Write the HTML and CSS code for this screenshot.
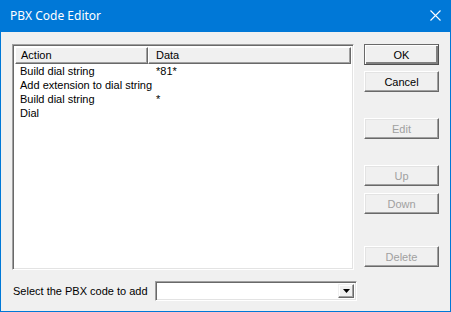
FILE: index.html
```html
<!DOCTYPE html>
<html>
<head>
    <title>PBX Code Editor</title>
    <link rel="stylesheet" href="styles.css">
</head>
<body>
    <div class="window">
        <div class="titlebar">
            <span class="title">PBX Code Editor</span>
            <svg class="close" width="11" height="11" viewBox="0 0 11 11">
                <path d="M0.5 0.5 L10.5 10.5 M10.5 0.5 L0.5 10.5" stroke="#fff" stroke-width="1.1" fill="none"/>
            </svg>
        </div>

        <div class="client">
            <div class="main">
                <div class="listview">
                    <div class="header">
                        <div class="col col-action">Action</div>
                        <div class="col col-data">Data</div>
                    </div>
                    <div class="rows">
                        <div class="row"><span class="cell-action">Build dial string</span><span class="cell-data">*81*</span></div>
                        <div class="row"><span class="cell-action">Add extension to dial string</span><span class="cell-data"></span></div>
                        <div class="row"><span class="cell-action">Build dial string</span><span class="cell-data">*</span></div>
                        <div class="row"><span class="cell-action">Dial</span><span class="cell-data"></span></div>
                    </div>
                </div>

                <div class="buttons">
                    <button class="btn default">OK</button>
                    <button class="btn btn-cancel">Cancel</button>
                    <button class="btn btn-edit" disabled>Edit</button>
                    <button class="btn btn-up" disabled>Up</button>
                    <button class="btn btn-down" disabled>Down</button>
                    <button class="btn btn-delete" disabled>Delete</button>
                </div>
            </div>

            <div class="add-row">
                <label>Select the PBX code to add</label>
                <div class="combo">
                    <div class="combo-field"></div>
                    <div class="combo-btn">
                        <svg width="7" height="4" viewBox="0 0 7 4"><path d="M0 0 H7 L3.5 4 Z" fill="#000"/></svg>
                    </div>
                </div>
            </div>
        </div>
    </div>
</body>
</html>
```

FILE: styles.css
```css
body { margin: 0; background: #f0f0f0; font-family: "Liberation Sans", Arial, sans-serif; font-size: 11px; color: #000; }
.window { width: 451px; height: 312px; box-sizing: border-box; border: 1px solid #0078d7; border-top: none; background: #f0f0f0; display: flex; flex-direction: column; }
.titlebar { height: 31px; margin: 0 -1px; background: #0078d7; display: flex; align-items: center; justify-content: space-between; padding: 0 10px 1px 10px; }
.title { color: #fff; font-family: "Noto Sans", "Open Sans", sans-serif; font-size: 12px; }

.client { padding: 12px 11px 0 11px; }
.main { display: flex; gap: 10px; }

.listview { width: 342px; height: 226px; box-sizing: border-box; background: #fff; border: 1px solid; border-color: #a0a0a0 #fff #fff #a0a0a0; box-shadow: inset 1px 1px 0 #696969, inset -1px -1px 0 #e3e3e3; padding: 2px 2px; }
.header { display: flex; height: 17px; }
.col { box-sizing: border-box; height: 17px; line-height: 14px; padding-left: 5px; background: #f0f0f0; border-top: 1px solid #fff; border-left: 1px solid #fff; border-right: 1px solid #696969; border-bottom: 1px solid #696969; box-shadow: inset -1px -1px 0 #a0a0a0; }
.col-action { width: 133px; }
.col-data { flex: 1; padding-left: 7px; }
.row { display: flex; height: 14px; line-height: 14px; }
.cell-action { width: 133px; box-sizing: border-box; padding-left: 5px; white-space: nowrap; }
.cell-data { padding-left: 8px; }

.buttons { display: flex; flex-direction: column; width: 75px; }
.btn { width: 75px; height: 21px; box-sizing: border-box; padding: 0; font-family: "Liberation Sans", Arial, sans-serif; font-size: 11px; color: #000; background: #f0f0f0; border: 1px solid; border-color: #fff #696969 #696969 #fff; box-shadow: inset -1px -1px 0 #a0a0a0, inset 1px 1px 0 #e3e3e3; }
.btn.default { border-color: #696969 #505050 #505050 #696969; box-shadow: inset 1px 1px 0 #fff, inset -2px -2px 0 #808080, inset -1px -1px 0 #696969; }
.btn:disabled { color: #a0a0a0; }
.btn-cancel { margin-top: 6px; }
.btn-edit { margin-top: 26px; }
.btn-up { margin-top: 26px; }
.btn-down { margin-top: 7px; }
.btn-delete { margin-top: 32px; }

.add-row { display: flex; align-items: center; margin-top: 11px; }
.add-row label { width: 142px; padding-left: 1px; }
.combo { display: flex; width: 202px; height: 20px; box-sizing: border-box; background: #fff; border: 1px solid; border-color: #a0a0a0 #fff #fff #a0a0a0; box-shadow: inset 1px 1px 0 #696969, inset -1px -1px 0 #e3e3e3; padding: 2px; }
.combo-field { flex: 1; }
.combo-btn { width: 16px; box-sizing: border-box; background: #f0f0f0; border: 1px solid; border-color: #f0f0f0 #696969 #696969 #f0f0f0; box-shadow: inset -1px -1px 0 #a0a0a0, inset 1px 1px 0 #fff; display: flex; align-items: center; justify-content: center; }
```
